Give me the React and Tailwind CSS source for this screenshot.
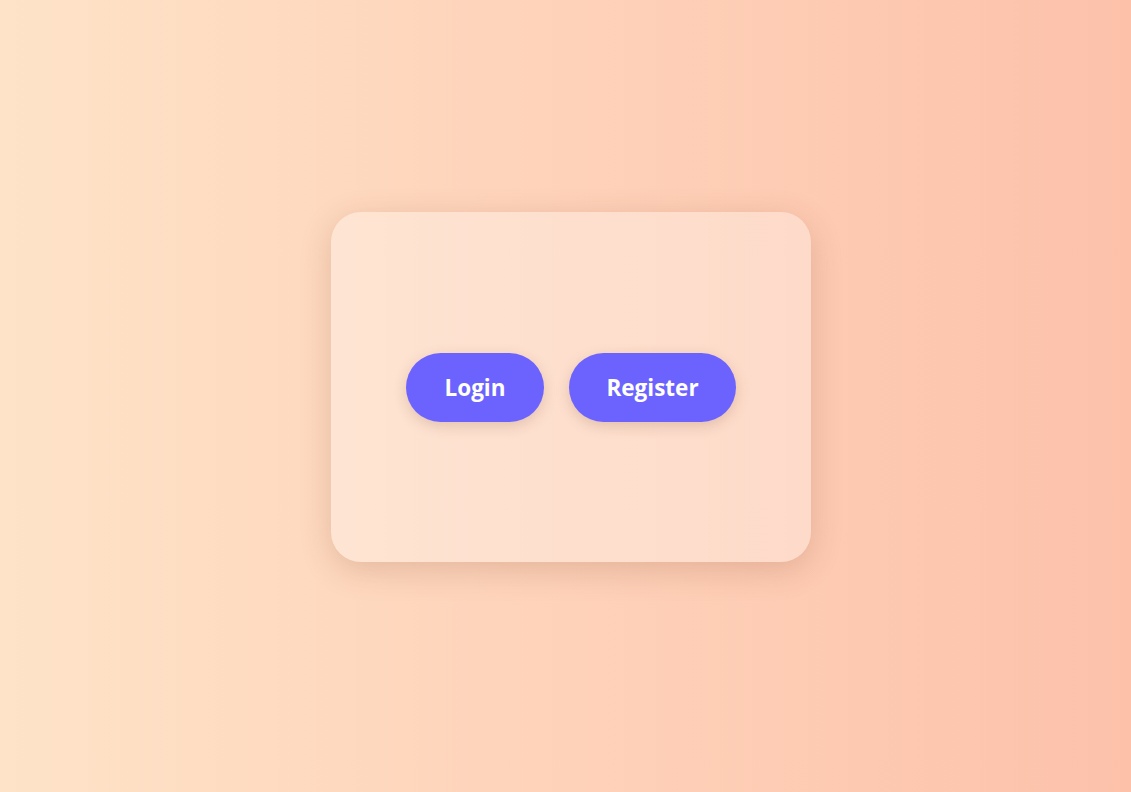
import React from "react";

function App() {
	return (
		<div className="min-h-screen w-full flex items-center justify-center pl-[11px] pb-[18px] bg-gradient-to-r from-[#fee3c8] to-[#fdc1aa] font-['Open_Sans',sans-serif]">
			<div className="w-[480px] h-[350px] rounded-[30px] bg-white/30 shadow-[0_8px_32px_rgba(120,60,30,0.2)] flex items-center justify-center gap-[25px]">
				<button className="h-[69px] w-[138px] rounded-full bg-[#6c63ff] text-white text-[22.5px] font-bold pt-[2px] shadow-[0_4px_14px_rgba(100,50,30,0.18)]">
					Login
				</button>
				<button className="h-[69px] w-[167px] rounded-full bg-[#6c63ff] text-white text-[22.5px] font-bold pt-[2px] shadow-[0_4px_14px_rgba(100,50,30,0.18)]">
					Register
				</button>
			</div>
		</div>
	);
}

export default App;
